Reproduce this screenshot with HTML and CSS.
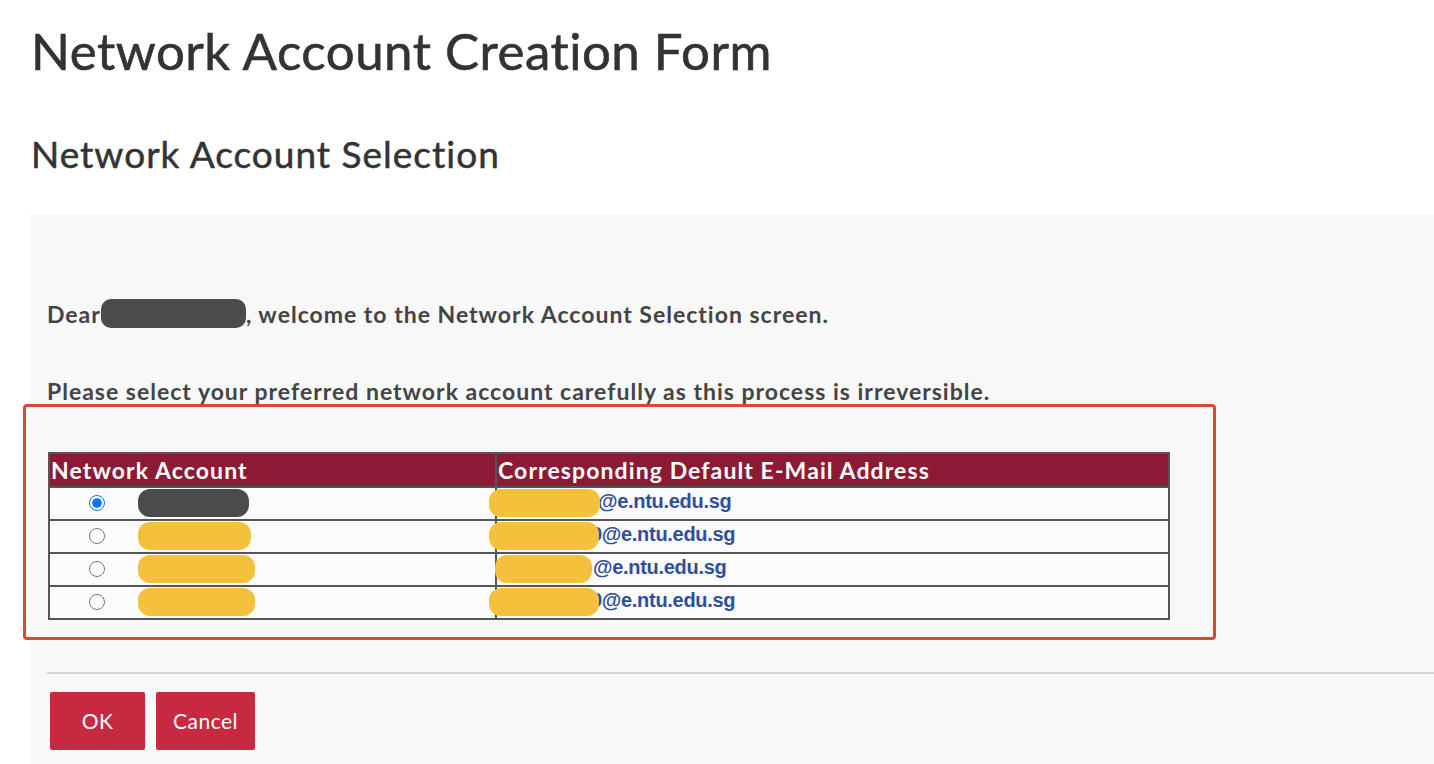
FILE: index.html
```html
<!DOCTYPE html>
<html lang="en">
<head>
  <meta charset="UTF-8" />
  <meta name="viewport" content="width=device-width, initial-scale=1.0"/>
  <title>Network Account Creation Form</title>
  <link rel="stylesheet" href="styles.css">
</head>

<body>
<div class="page">
  <h1 class="title">Network Account Creation Form</h1>
  <h2 class="subtitle">Network Account Selection</h2>

  <div class="panel">
    <p class="greeting">Dear<span class="redact dark name"></span>, welcome to the Network Account Selection screen.</p>
    <p class="notice">Please select your preferred network account carefully as this process is irreversible.</p>

    <!-- highlighted selection area -->
    <div class="highlight">
      <table class="accounts">
        <tr>
          <th class="col-acct">Network Account</th>
          <th>Corresponding Default E-Mail Address</th>
        </tr>
        <tr>
          <td class="acct"><input type="radio" name="account" checked /><span class="redact dark w1"></span></td>
          <td class="mail"><span class="redact yellow m1"></span>@e.ntu.edu.sg</td>
        </tr>
        <tr>
          <td class="acct"><input type="radio" name="account" /><span class="redact yellow w2"></span></td>
          <td class="mail"><span class="redact yellow m2"></span>9@e.ntu.edu.sg</td>
        </tr>
        <tr>
          <td class="acct"><input type="radio" name="account" /><span class="redact yellow w3"></span></td>
          <td class="mail"><span class="redact yellow m3"></span>@e.ntu.edu.sg</td>
        </tr>
        <tr>
          <td class="acct"><input type="radio" name="account" /><span class="redact yellow w3"></span></td>
          <td class="mail"><span class="redact yellow m2"></span>9@e.ntu.edu.sg</td>
        </tr>
      </table>
    </div>

    <hr class="divider" />

    <div class="actions">
      <button class="btn btn-ok">OK</button>
      <button class="btn btn-cancel">Cancel</button>
    </div>
  </div>
</div>
</body>
</html>
```

FILE: styles.css
```css
body {
  margin: 0;
  background-color: #fff;
  font-family: Lato, "Open Sans", sans-serif;
  color: #333;
}
.page {
  padding-left: 31px;
  overflow: hidden;
  height: 764px;
}
.title {
  font-size: 51px;
  font-weight: 400;
  letter-spacing: 0.5px;
  line-height: 1.2;
  margin: 20px 0 0;
  color: #333;
  -webkit-text-stroke: 0.6px #333;
}
.subtitle {
  font-size: 37px;
  font-weight: 400;
  letter-spacing: 1px;
  line-height: 1.2;
  margin: 51px 0 0;
  color: #333;
  -webkit-text-stroke: 0.5px #333;
}
.panel {
  margin-top: 37px;
  background-color: #f8f8f8;
  padding: 85px 0 40px 16px;
}
.greeting, .notice {
  margin: 0;
  font-size: 23px;
  font-weight: 700;
  letter-spacing: 1px;
  line-height: 30px;
  color: #444;
}
.notice {
  margin-top: 47px;
}
.redact {
  display: inline-block;
  height: 28px;
  border-radius: 12px;
  vertical-align: middle;
  letter-spacing: 0;
}
.redact.dark {
  background-color: #4b4b4b;
}
.redact.yellow {
  background-color: #f3c13b;
}
.name {
  width: 145px;
  height: 29px;
  border-radius: 10px;
  vertical-align: -5px;
}
.highlight {
  box-sizing: border-box;
  margin: -2px 0 0 -24px;
  width: 1193px;
  border: 3px solid #d9473b;
  border-radius: 4px;
  padding: 45px 0 17px 22px;
}
.accounts {
  width: 1122px;
  border-collapse: collapse;
  border: 2px solid #555;
  background-color: #fbfbfb;
}
.accounts th {
  background-color: #8c1a35;
  color: #fff;
  font-size: 23px;
  font-weight: 700;
  letter-spacing: 1.1px;
  text-align: left;
  height: 32px;
  padding: 0 1px;
  border: 2px solid #555;
}
.col-acct {
  width: 443px;
}
.accounts td {
  height: 31px;
  padding: 0;
  border: 2px solid #555;
}
.acct {
  padding-left: 39px !important;
}
.acct input {
  margin: 0 33px 0 0;
  width: 16px;
  height: 16px;
  vertical-align: middle;
}
.w1 { width: 111px; }
.w2 { width: 113px; }
.w3 { width: 117px; }
.mail {
  font-family: "Liberation Sans", Arial, sans-serif;
  font-size: 20px;
  font-weight: 700;
  color: #2f4f9b;
  letter-spacing: -0.3px;
}
.mail .redact {
  position: relative;
  z-index: 1;
  margin-left: -8px;
}
.m1 { width: 111px; margin-right: -2px; }
.m2 { width: 110px; margin-right: -8px; }
.mail .m3 { width: 97px; margin-left: -2px; margin-right: 1px; }
.divider {
  border: none;
  border-top: 2px solid #d3d3d3;
  margin: 32px 0 0;
}
.actions {
  margin: 18px 0 0 3px;
  display: flex;
  gap: 11px;
}
.btn {
  height: 58px;
  padding: 0;
  border: none;
  border-radius: 2px;
  background-color: #c72a40;
  color: #fff;
  font-family: Lato, sans-serif;
  font-size: 21px;
  letter-spacing: 0.5px;
  cursor: pointer;
}
.btn-ok {
  width: 95px;
}
.btn-cancel {
  width: 99px;
}
```
